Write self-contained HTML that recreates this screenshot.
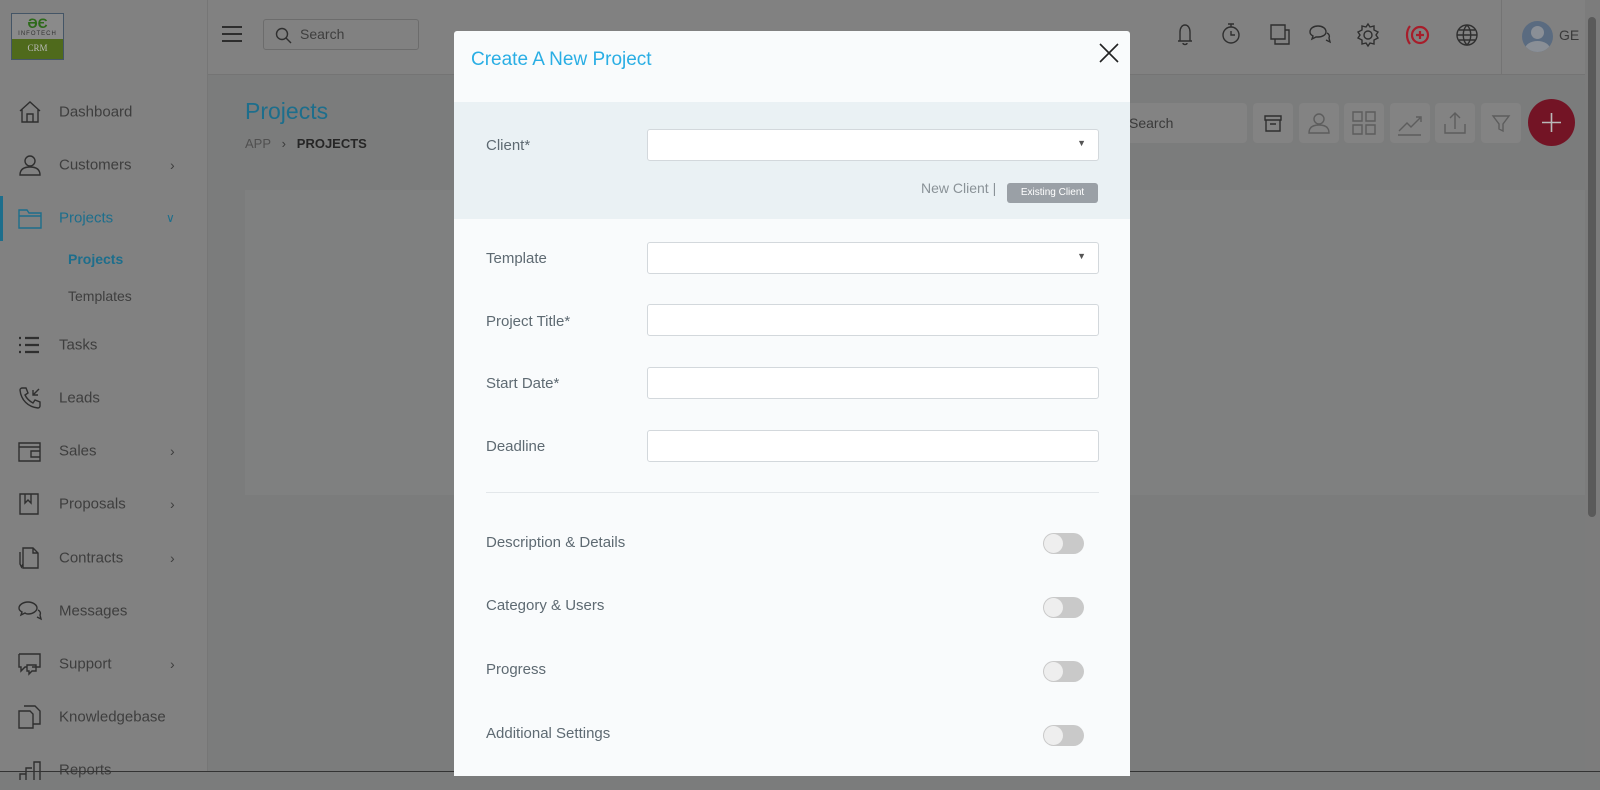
<!DOCTYPE html>
<html><head><meta charset="utf-8"><style>
*{box-sizing:border-box;margin:0;padding:0}
body{width:1600px;height:772px;overflow:hidden;font-family:"Liberation Sans",sans-serif;background:#7b7c7c;position:relative}
.abs{position:absolute}
.side{left:0;top:0;width:208px;height:772px;background:#818181;border-right:1px solid #767676}
.top{left:208px;top:0;width:1377px;height:75px;background:#818181;border-bottom:1px solid #747474}
.logo{left:11px;top:13px;width:53px;height:47px;border:1px solid #456;background:#8a8a8a}
.logo .g{position:absolute;left:0;right:0;bottom:0;height:20px;background:#4f6a1c;color:#bbb;font:9px "Liberation Serif",serif;text-align:center;line-height:18px}
.nav{left:0;width:208px;height:40px;font-size:15px;color:#3e3e3e}
.nav span{position:absolute;left:59px;top:50%;transform:translateY(-50%)}
.nav svg{position:absolute;left:18px;top:50%;transform:translateY(-50%)}
.nav .ch{position:absolute;left:170px;top:50%;transform:translateY(-50%);font-size:14px}
.ic{stroke:#2f2f2f;fill:none;stroke-width:1.4}
.modal{left:454px;top:31px;width:676px;height:745px;background:#f9fbfc;border-radius:3px 3px 0 0}
.lbl{position:absolute;left:32px;font-size:15px;color:#5e6a72}
.inp{position:absolute;left:193px;width:452px;height:32px;background:#fff;border:1px solid #d3d8dc;border-radius:3px}
.tog{position:absolute;left:589px;width:41px;height:21px;background:#c9c9c9;border-radius:11px}
.tog:after{content:"";position:absolute;left:1px;top:1px;width:19px;height:19px;border-radius:50%;background:#eeeeee}
.tb{top:103px;width:40px;height:40px;background:#838383;border-radius:4px}
</style></head><body>
<div class="abs side"></div>
<div class="abs top"></div>
<div class="abs logo"><div style="color:#2d6a1a;font-weight:bold;font-size:14px;text-align:center;margin-top:1px">ƏЄ</div><div style="font-size:6px;text-align:center;color:#333;letter-spacing:1px">INFOTECH</div><div class="g">CRM</div></div>
<svg class="abs" style="left:221px;top:24px" width="22" height="20"><path d="M1 3H21M1 10H21M1 17H21" stroke="#2d2d2d" stroke-width="2"/></svg>
<div class="abs" style="left:263px;top:19px;width:156px;height:31px;border:1px solid #6c6c6c;border-radius:3px;color:#3e3e3e;font-size:14px;line-height:29px;padding-left:36px">Search
<svg class="abs" style="left:11px;top:7px" width="17" height="17"><circle cx="7" cy="7" r="5.5" class="ic"/><path d="M11 11L16 16" class="ic"/></svg></div>

<div class="abs nav" style="top:92px"><svg width="24" height="24"><path d="M2 11L12 2L22 11M4 9V22H20V9M9 22V14H15V22" class="ic"/></svg><span>Dashboard</span></div>
<div class="abs nav" style="top:145px"><svg width="24" height="24"><circle cx="12" cy="8" r="5" class="ic"/><path d="M2 22C2 16 6 14 12 14C18 14 22 16 22 22Z" class="ic"/></svg><span>Customers</span><b class="ch" style="font-weight:normal">›</b></div>
<div class="abs" style="left:0;top:196px;width:3px;height:45px;background:#1d6e8c"></div>
<div class="abs nav" style="top:198px;color:#1d6e8c"><svg width="24" height="22"><path d="M1 3H9L11 6H23V21H1Z M1 9H23" stroke="#1d6e8c" fill="none" stroke-width="1.4"/></svg><span>Projects</span><span style="left:166px;font-size:12px">∨</span></div>
<div class="abs" style="left:68px;top:251px;font-size:14px;color:#1d6e8c;font-weight:bold">Projects</div>
<div class="abs" style="left:68px;top:288px;font-size:14px;color:#3e3e3e">Templates</div>
<div class="abs nav" style="top:325px"><svg width="22" height="18"><path d="M1 2H3M1 9H3M1 16H3M7 2H21M7 9H21M7 16H21" stroke="#2f2f2f" stroke-width="2.2"/></svg><span>Tasks</span></div>
<div class="abs nav" style="top:378px"><svg width="24" height="24"><path d="M4 2L8 2L10 7L7 9C9 13 11 15 15 17L17 14L22 16V20C22 21 21 22 20 22C10 21 3 14 2 4C2 3 3 2 4 2Z M15 9L21 3M15 4V9H20" class="ic"/></svg><span>Leads</span></div>
<div class="abs nav" style="top:431px"><svg width="24" height="22"><path d="M1 3H22V21H1Z M1 7H22 M13 11H22V17H13Z" class="ic"/></svg><span>Sales</span><b class="ch" style="font-weight:normal">›</b></div>
<div class="abs nav" style="top:484px"><svg width="22" height="24"><path d="M2 2H20V22H2Z M7 2V11L10 8L13 11V2" class="ic"/></svg><span>Proposals</span><b class="ch" style="font-weight:normal">›</b></div>
<div class="abs nav" style="top:538px"><svg width="22" height="24"><path d="M5 2H15L20 7V22H5Z M15 2V7H20 M2 6V18L3.5 21L5 18" class="ic"/></svg><span>Contracts</span><b class="ch" style="font-weight:normal">›</b></div>
<div class="abs nav" style="top:591px"><svg width="24" height="24"><path d="M10 3C5 3 1 6 1 9C1 11 2 12 4 13L3 16L7 14C8 15 9 15 10 15C15 15 19 12 19 9C19 6 15 3 10 3Z M20 11C22 12 23 14 22 16L23 20L19 18" class="ic"/></svg><span>Messages</span></div>
<div class="abs nav" style="top:644px"><svg width="24" height="24"><path d="M1 2H22V15H14 M1 2V15H3L3 19L7 15H9 M9 13H18V19H14L11 22V19H9Z" class="ic"/></svg><span>Support</span><b class="ch" style="font-weight:normal">›</b></div>
<div class="abs nav" style="top:697px"><svg width="24" height="24"><path d="M1 6H12L15 9V23H1Z M6 1H17L22 6V19H15" class="ic"/></svg><span>Knowledgebase</span></div>
<div class="abs nav" style="top:750px"><svg width="24" height="24"><path d="M2 22V16H8V22M8 22V10H14M16 22V4H22V22" class="ic"/></svg><span>Reports</span></div>

<div class="abs" style="left:245px;top:98px;font-size:23px;color:#1d6e8c">Projects</div>
<div class="abs" style="left:245px;top:136px;font-size:13px;color:#3a3a3a"><span style="color:#505050">APP</span> &nbsp; › &nbsp; <b style="font-weight:600;color:#262626">PROJECTS</b></div>
<div class="abs" style="left:245px;top:190px;width:1345px;height:305px;background:#7f8080"></div>

<div class="abs" style="left:1120px;top:103px;width:127px;height:40px;background:#838383;border-radius:4px;font-size:14px;color:#3a3a3a;line-height:40px;padding-left:9px">Search</div>
<div class="abs tb" style="left:1253px"><svg width="40" height="40"><path d="M12 13H28V17H12Z M13 17V28H27V17 M17 21H23" class="ic" stroke="#5d5d5d"/></svg></div>
<div class="abs tb" style="left:1299px"><svg width="40" height="40"><circle cx="20" cy="16" r="5" fill="none" stroke="#5d5d5d" stroke-width="1.4"/><path d="M10 30C10 24 14 22 20 22C26 22 30 24 30 30Z" fill="none" stroke="#5d5d5d" stroke-width="1.4"/></svg></div>
<div class="abs tb" style="left:1344px"><svg width="40" height="40"><path d="M9 9H18V18H9ZM22 9H31V18H22ZM9 22H18V31H9ZM22 22H31V31H22Z" fill="none" stroke="#5d5d5d" stroke-width="1.4"/></svg></div>
<div class="abs tb" style="left:1390px"><svg width="40" height="40"><path d="M9 28L17 20L21 24L30 15M26 14H31V19M8 32H31" fill="none" stroke="#5d5d5d" stroke-width="1.4"/></svg></div>
<div class="abs tb" style="left:1435px"><svg width="40" height="40"><path d="M20 26V10M15 15L20 10L25 15M10 21V30H30V21" fill="none" stroke="#5d5d5d" stroke-width="1.4"/></svg></div>
<div class="abs tb" style="left:1481px"><svg width="40" height="40"><path d="M12 13H28L22 21V28L18 26V21Z" fill="none" stroke="#5d5d5d" stroke-width="1.4"/></svg></div>
<div class="abs" style="left:1528px;top:99px;width:47px;height:47px;border-radius:50%;background:#731425"><svg width="47" height="47"><path d="M23.5 14V33M14 23.5H33" stroke="#b9b9b9" stroke-width="1.6"/></svg></div>

<svg class="abs" style="left:1172px;top:20px" width="390" height="30">
<g class="ic" stroke="#2a2a2a">
<path d="M8 21V12C8 8 10 5 13 5C16 5 18 8 18 12V21H20H6M11 23C11 25 15 25 15 23"/>
<circle cx="59" cy="15" r="8"/><path d="M56 4H62M59 4V7M59 11V15H63"/>
<path d="M99 5H113V19H99Z M103 19V24H117V10H113" />
<path d="M146 6C142 6 138 8 138 12C138 14 139 15 141 16L140 19L144 17C145 17 146 17 146 17C150 17 154 15 154 12C154 8 150 6 146 6Z M155 13C157 14 158 16 157 18L158 22L154 20"/>
<circle cx="196" cy="15" r="4"/><path d="M196 4L198 7L202 6L202 10L206 12L204 15L206 18L202 20L202 24L198 23L196 26L194 23L190 24L190 20L186 18L188 15L186 12L190 10L190 6L194 7Z"/>
<circle cx="295" cy="15" r="10"/><path d="M285 15H305M295 5C290 10 290 20 295 25C300 20 300 10 295 5M287 10H303M287 20H303"/>
</g>
<g fill="none" stroke="#a71d2a" stroke-width="2.2"><circle cx="248" cy="15" r="8"/><path d="M248 11V19M244 15H252M238 6C234 11 234 19 238 24"/></g>
</svg>
<div class="abs" style="left:1501px;top:0;width:1px;height:75px;background:#747474"></div>
<div class="abs" style="left:1522px;top:21px;width:31px;height:31px;border-radius:50%;background:#5a6b80;overflow:hidden"><div style="position:absolute;left:9px;top:5px;width:13px;height:13px;border-radius:50%;background:#8a8f96"></div><div style="position:absolute;left:3px;top:20px;width:25px;height:16px;border-radius:50%;background:#8a8f96"></div></div>
<div class="abs" style="left:1559px;top:27px;font-size:14px;color:#3a3a3a">GE</div>
<div class="abs" style="left:1585px;top:0;width:15px;height:772px;background:#7c7c7c"></div>
<div class="abs" style="left:1588px;top:17px;width:8px;height:500px;background:#5a5a5a;border-radius:4px"></div>
<div class="abs" style="left:0;top:771px;width:1600px;height:1px;background:#333"></div>

<div class="abs modal">
  <div class="abs" style="left:17px;top:18px;font-size:19px;color:#2aaee4">Create A New Project</div>
  <svg class="abs" style="left:645px;top:12px" width="20" height="20"><path d="M1 1L19 19M19 1L1 19" stroke="#222" stroke-width="1.6"/></svg>
  <div class="abs" style="left:0;top:71px;width:676px;height:117px;background:#eaf1f4"></div>
  <div class="lbl" style="top:106px">Client*</div>
  <div class="inp" style="top:98px"><span style="position:absolute;right:12px;top:8px;font-size:9px;color:#555">▼</span></div>
  <div class="abs" style="left:467px;top:149px;font-size:14px;color:#8a9297">New Client |</div>
  <div class="abs" style="left:553px;top:152px;width:91px;height:20px;background:#9aa0a6;border-radius:3px;color:#fff;font-size:10px;text-align:center;line-height:20px">Existing Client</div>
  <div class="lbl" style="top:219px">Template</div>
  <div class="inp" style="top:211px"><span style="position:absolute;right:12px;top:8px;font-size:9px;color:#555">▼</span></div>
  <div class="lbl" style="top:282px">Project Title*</div>
  <div class="inp" style="top:273px"></div>
  <div class="lbl" style="top:344px">Start Date*</div>
  <div class="inp" style="top:336px"></div>
  <div class="lbl" style="top:407px">Deadline</div>
  <div class="inp" style="top:399px"></div>
  <div class="abs" style="left:32px;top:461px;width:613px;height:1px;background:#e3e7ea"></div>
  <div class="lbl" style="top:503px">Description &amp; Details</div><div class="tog" style="top:502px"></div>
  <div class="lbl" style="top:566px">Category &amp; Users</div><div class="tog" style="top:566px"></div>
  <div class="lbl" style="top:630px">Progress</div><div class="tog" style="top:630px"></div>
  <div class="lbl" style="top:694px">Additional Settings</div><div class="tog" style="top:694px"></div>
</div>
</body></html>
